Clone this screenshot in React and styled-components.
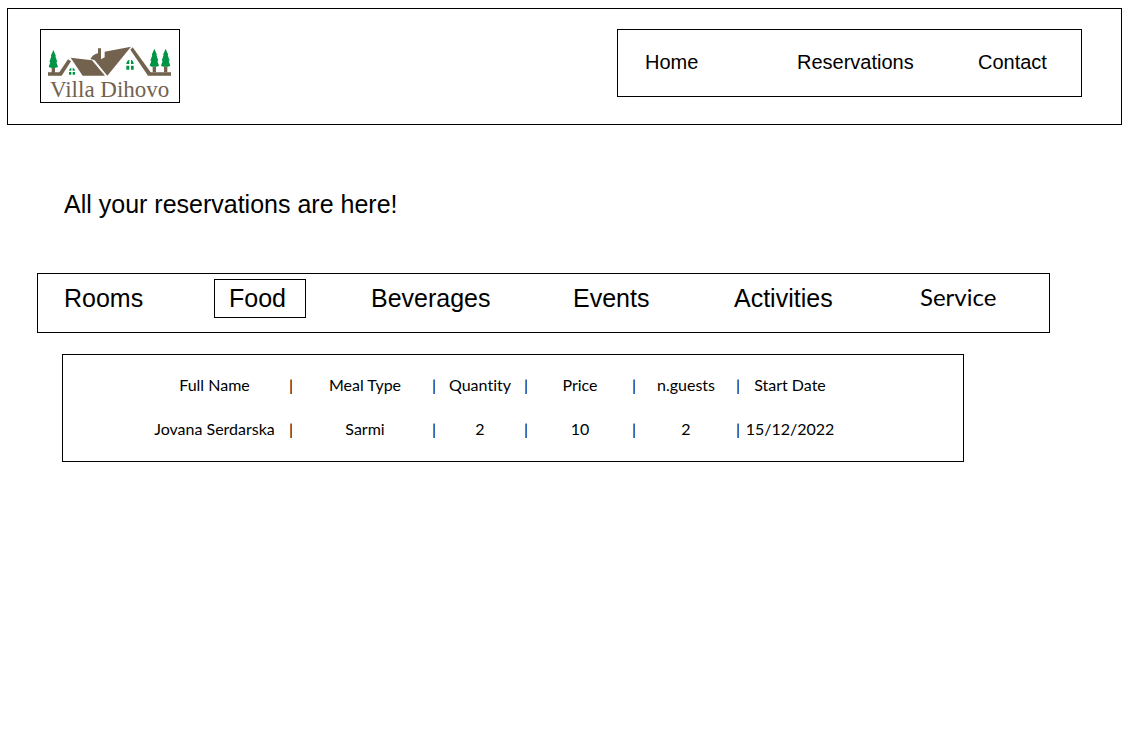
import React, { useState } from "react";
import styled, { createGlobalStyle } from "styled-components";

const tabs = ["Rooms", "Food", "Beverages", "Events", "Activities", "Service"];

const columns = [
  { key: "name", label: "Full Name", width: 131, gap: 22 },
  { key: "meal", label: "Meal Type", width: 126, gap: 12 },
  { key: "quantity", label: "Quantity", width: 80, gap: 12 },
  { key: "price", label: "Price", width: 96, gap: 12 },
  { key: "guests", label: "n.guests", width: 92, gap: 12 },
  { key: "date", label: "Start Date", width: 92 },
];

const reservations = [
  {
    name: "Jovana Serdarska",
    meal: "Sarmi",
    quantity: 2,
    price: 10,
    guests: 2,
    date: "15/12/2022",
  },
];

const Tree = ({ x, y }) => (
  <g transform={`translate(${x} ${y})`}>
    <path
      fill="#009444"
      d="M0 -1 L8 18 H6 L12 35 H9 L14 50 Q0 57 -14 50 L-9 35 H-12 L-6 18 H-8 Z"
    />
    <path fill="#72624e" d="M-5 53 H5 V70 H-5 Z" />
  </g>
);

const Logo = () => (
  <LogoSvg viewBox="15 18 414 216" role="img" aria-label="Villa Dihovo">
    <g fill="#72624e">
      <path d="M36 145 H70 L96 106 L105 112 L77 155 H36 Z" />
      <path d="M104 101 L168 109 L207 155 H140 Z" />
      <path d="M163 106 Q170 91 186 88 V73 H195 V106 L206 100 V83 L285 68 L214 155 L176 109 Q170 106 163 106 Z" />
      <path d="M290 70 L344 145 H405 V155 H336 L283 77 Z" />
    </g>
    <Tree x={52} y={79} />
    <Tree x={355} y={75} />
    <Tree x={389} y={75} />
    <g fill="#009444">
      <path d="M99 140 Q100 132 106 131 V140 Z M110 131 Q116 132 117 140 H110 Z M99 144 H106 V152 H99 Z M110 144 H117 V152 H110 Z" />
      <path d="M271 120 Q272 109 280 108 V120 Z M285 108 Q292 109 293 120 H285 Z M271 125 H280 V137 H271 Z M285 125 H293 V137 H285 Z" />
    </g>
    <LogoText x="42" y="218">
      Villa Dihovo
    </LogoText>
  </LogoSvg>
);

const ReservationsTable = () => (
  <Table>
    <colgroup>
      {columns.map((column) => (
        <React.Fragment key={column.key}>
          <Column $share={column.width} />
          {column.gap && <Column $share={column.gap} />}
        </React.Fragment>
      ))}
    </colgroup>
    <thead>
      <tr>
        {columns.map((column) => (
          <React.Fragment key={column.key}>
            <HeadCell scope="col">{column.label}</HeadCell>
            {column.gap && <Cell aria-hidden="true">|</Cell>}
          </React.Fragment>
        ))}
      </tr>
    </thead>
    <tbody>
      {reservations.map((reservation) => (
        <tr key={reservation.name}>
          {columns.map((column) => (
            <React.Fragment key={column.key}>
              <Cell>{reservation[column.key]}</Cell>
              {column.gap && <Cell aria-hidden="true">|</Cell>}
            </React.Fragment>
          ))}
        </tr>
      ))}
    </tbody>
  </Table>
);

const App = () => {
  const [activeTab, setActiveTab] = useState("Food");

  return (
    <>
      <GlobalStyle />
      <Header>
        <LogoLink href="#home">
          <Logo />
        </LogoLink>
        <Nav>
          <NavLink href="#home">Home</NavLink>
          <NavLink href="#reservations">Reservations</NavLink>
          <NavLink href="#contact">Contact</NavLink>
        </Nav>
      </Header>
      <main>
        <Title>All your reservations are here!</Title>
        <TabBar>
          {tabs.map((tab) => (
            <Tab
              key={tab}
              type="button"
              $active={tab === activeTab}
              $humanist={tab === "Service"}
              aria-pressed={tab === activeTab}
              onClick={() => setActiveTab(tab)}
            >
              {tab}
            </Tab>
          ))}
        </TabBar>
        <Panel>
          <ReservationsTable />
        </Panel>
      </main>
    </>
  );
};

const GlobalStyle = createGlobalStyle`
  * {
    box-sizing: border-box;
  }

  body {
    margin: 0;
    background-color: #ffffff;
    color: #000000;
    font-family: "Liberation Sans", Arial, sans-serif;
  }
`;

const Header = styled.header`
  display: grid;
  grid-template-columns: 577fr 465fr;
  align-items: start;
  margin: 8px 6px 0 7px;
  padding: 20px 39px 21px 32px;
  border: 1px solid #000000;
`;

const LogoLink = styled.a`
  display: block;
  width: 140px;
  border: 1px solid #000000;
`;

const LogoSvg = styled.svg`
  display: block;
  width: 100%;
`;

const LogoText = styled.text`
  fill: #72624e;
  font-family: "Liberation Serif", serif;
  font-size: 69px;
`;

const Nav = styled.nav`
  display: grid;
  grid-template-columns: 152fr 181fr 103fr;
  padding: 20px 0 22px 27px;
  border: 1px solid #000000;
`;

const NavLink = styled.a`
  justify-self: start;
  color: inherit;
  font-size: 20px;
  line-height: 24px;
  text-decoration: none;
`;

const Title = styled.h1`
  margin: 63px 64px 53px;
  font-size: 25px;
  font-weight: normal;
  line-height: 32px;
`;

const TabBar = styled.div`
  display: grid;
  grid-template-columns: 151fr 156fr 202fr 161fr 186fr 130fr;
  align-items: start;
  margin: 0 78px 0 37px;
  padding: 5px 0 14px 25px;
  border: 1px solid #000000;
`;

const Tab = styled.button`
  justify-self: start;
  padding: ${(props) => (props.$active ? "0 19px 0 14px" : "0")};
  border: 1px solid ${(props) => (props.$active ? "#000000" : "transparent")};
  background-color: transparent;
  color: inherit;
  font-family: ${(props) =>
    props.$humanist ? "Lato, sans-serif" : '"Liberation Sans", Arial, sans-serif'};
  font-size: ${(props) => (props.$humanist ? "24px" : "25px")};
  line-height: ${(props) => (props.$humanist ? "34px" : "37px")};
  cursor: pointer;
`;

const Panel = styled.section`
  margin: 21px 164px 0 62px;
  padding: 8px 127px 10px 86px;
  border: 1px solid #000000;
`;

const Table = styled.table`
  width: 100%;
  table-layout: fixed;
  border-collapse: collapse;
  font-family: Lato, sans-serif;
  font-size: 16px;
  font-variant-ligatures: none;
  line-height: 20px;
`;

const Column = styled.col`
  width: ${(props) => (props.$share / 687) * 100}%;
`;

const Cell = styled.td`
  padding: 12px 0;
  text-align: center;
  white-space: nowrap;
`;

const HeadCell = styled.th`
  padding: 12px 0;
  font-weight: normal;
  text-align: center;
  white-space: nowrap;
`;

export default App;
